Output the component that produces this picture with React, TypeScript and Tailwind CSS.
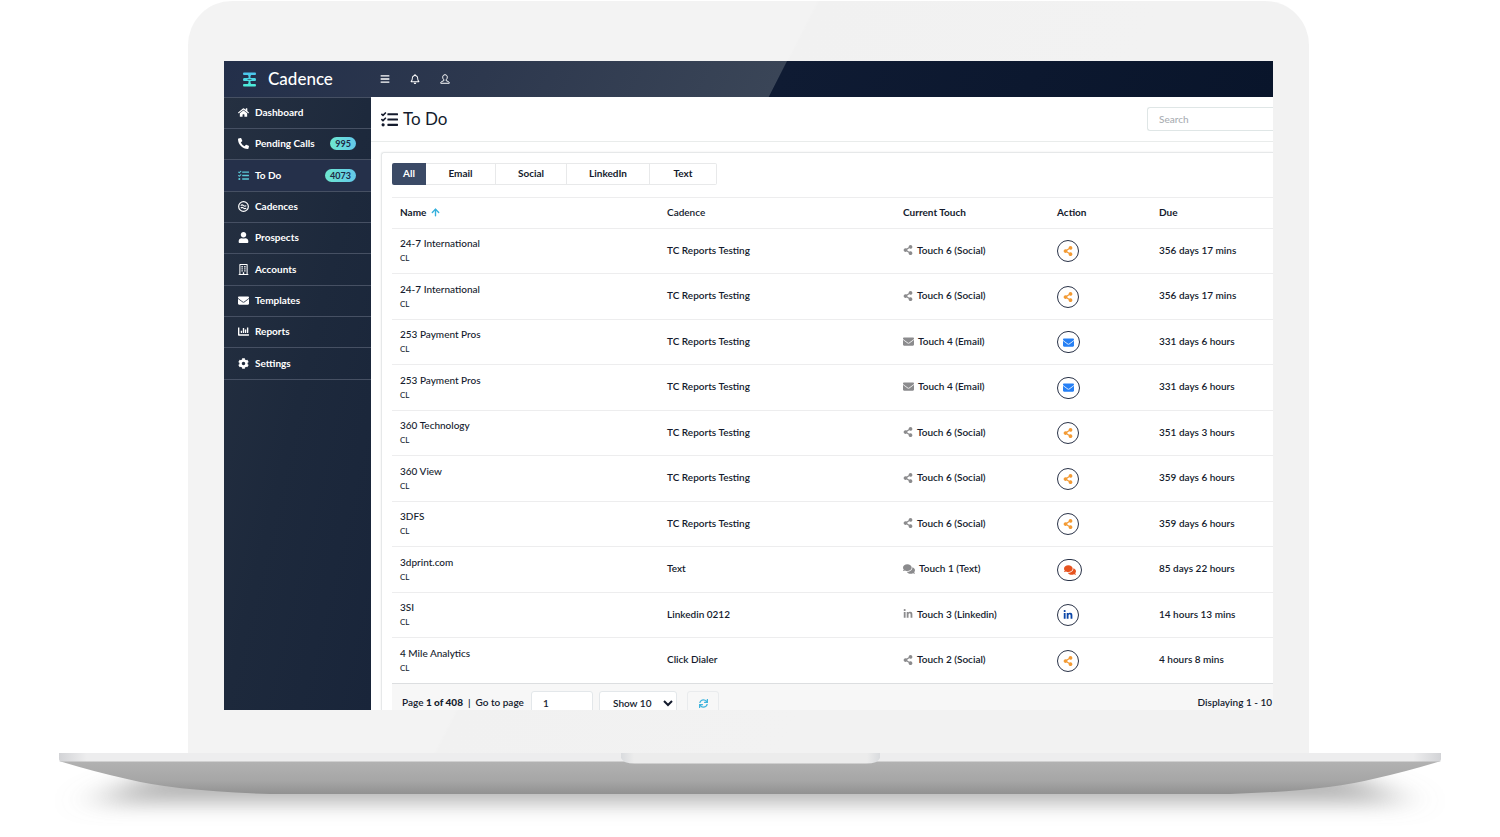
import { ArrowUp } from "lucide-react";
import type { IconType } from "react-icons";
import {
  FaBars,
  FaChartBar,
  FaCog,
  FaComments,
  FaEnvelope,
  FaHome,
  FaLinkedinIn,
  FaPhoneAlt,
  FaRegBell,
  FaRegBuilding,
  FaShareAlt,
  FaSync,
  FaTasks,
  FaUser,
} from "react-icons/fa";

type Channel = "social" | "email" | "text" | "linkedin";

interface Todo {
  name: string;
  cadence: string;
  touch: string;
  channel: Channel;
  due: string;
}

interface NavItem {
  label: string;
  icon: IconType | typeof CadenceIcon;
  count?: number;
  active?: boolean;
}

function CadenceIcon({ className }: { className?: string }) {
  return (
    <svg viewBox="0 0 20 20" className={className} fill="none" stroke="currentColor" strokeWidth="2.2">
      <circle cx="10" cy="10" r="8.8" />
      <path d="M5 8.300c2-2 3.300-1.600 5 0s3.300 1.600 5 0M5 12.800c2-2 3.300-1.600 5 0s3.300 1.600 5 0" strokeWidth="2" />
    </svg>
  );
}

function ProfileIcon({ className }: { className?: string }) {
  return (
    <svg viewBox="0 0 20 20" className={className} fill="none" stroke="currentColor" strokeWidth="2" strokeLinejoin="round">
      <path d="M10 1.500c-3 0-4.600 2-4.600 4.800 0 2.300.9 4.200 2.400 5.300v1.700L3 15.200c-1 .5-1.500 1.400-1.500 3.300h17c0-1.900-.5-2.800-1.500-3.300l-4.800-1.900v-1.700c1.500-1.100 2.400-3 2.400-5.300 0-2.800-1.600-4.800-4.600-4.800z" />
    </svg>
  );
}

function Logo() {
  return (
    <svg viewBox="0 0 13 15" className="h-[15px] w-[13px]">
      <defs>
        <linearGradient id="logo" x1="0" y1="0" x2="0" y2="1">
          <stop offset="0" stopColor="#4cc3ec" />
          <stop offset="1" stopColor="#4df0da" />
        </linearGradient>
      </defs>
      <path
        d="M1 .500h11q1 0 1 1.300t-1 1.300H8.200L7.500 4v2H12q1 0 1 1.500T12 9H7.500v2l.7.900H12q1 0 1 1.300t-1 1.300H1q-1 0-1-1.300t1-1.300h3.800l.7-.9V9H1Q0 9 0 7.500T1 6h4.500V4l-.7-.9H1q-1 0-1-1.300T1 .500z"
        fill="url(#logo)"
      />
      <path d="M4.500 7.500h4" stroke="#243049" strokeWidth=".6" />
    </svg>
  );
}

const navItems: NavItem[] = [
  { label: "Dashboard", icon: FaHome },
  { label: "Pending Calls", icon: FaPhoneAlt, count: 995 },
  { label: "To Do", icon: FaTasks, count: 4073, active: true },
  { label: "Cadences", icon: CadenceIcon },
  { label: "Prospects", icon: FaUser },
  { label: "Accounts", icon: FaRegBuilding },
  { label: "Templates", icon: FaEnvelope },
  { label: "Reports", icon: FaChartBar },
  { label: "Settings", icon: FaCog },
];

const tabs = [
  { label: "All", width: "w-[34px]" },
  { label: "Email", width: "w-[70px]" },
  { label: "Social", width: "w-[71px]" },
  { label: "LinkedIn", width: "w-[83px]" },
  { label: "Text", width: "w-[67px]" },
];

const todos: Todo[] = [
  { name: "24-7 International", cadence: "TC Reports Testing", touch: "Touch 6 (Social)", channel: "social", due: "356 days 17 mins" },
  { name: "24-7 International", cadence: "TC Reports Testing", touch: "Touch 6 (Social)", channel: "social", due: "356 days 17 mins" },
  { name: "253 Payment Pros", cadence: "TC Reports Testing", touch: "Touch 4 (Email)", channel: "email", due: "331 days 6 hours" },
  { name: "253 Payment Pros", cadence: "TC Reports Testing", touch: "Touch 4 (Email)", channel: "email", due: "331 days 6 hours" },
  { name: "360 Technology", cadence: "TC Reports Testing", touch: "Touch 6 (Social)", channel: "social", due: "351 days 3 hours" },
  { name: "360 View", cadence: "TC Reports Testing", touch: "Touch 6 (Social)", channel: "social", due: "359 days 6 hours" },
  { name: "3DFS", cadence: "TC Reports Testing", touch: "Touch 6 (Social)", channel: "social", due: "359 days 6 hours" },
  { name: "3dprint.com", cadence: "Text", touch: "Touch 1 (Text)", channel: "text", due: "85 days 22 hours" },
  { name: "3SI", cadence: "Linkedin 0212", touch: "Touch 3 (Linkedin)", channel: "linkedin", due: "14 hours 13 mins" },
  { name: "4 Mile Analytics", cadence: "Click Dialer", touch: "Touch 2 (Social)", channel: "social", due: "4 hours 8 mins" },
];

const channels: Record<Channel, { icon: IconType; size: string; button: string }> = {
  social: { icon: FaShareAlt, size: "size-[10px]", button: "w-[22px] text-[#f39a33]" },
  email: { icon: FaEnvelope, size: "size-[11px]", button: "w-[23px] text-[#2680f5]" },
  text: { icon: FaComments, size: "size-[12px]", button: "w-[25px] text-[#e6531f]" },
  linkedin: { icon: FaLinkedinIn, size: "size-[10px]", button: "w-[22px] text-[#0b46a8]" },
};

function Sidebar() {
  return (
    <nav className="w-[147px] shrink-0 bg-linear-to-br from-[#253041] via-[#1d293c] to-[#19253a]">
      <ul className="border-t border-[#465063]">
        {navItems.map(({ label, icon: Icon, count, active }) => (
          <li
            key={label}
            className={`h-[31px] border-b border-[#465063] nth-[3n]:h-8 ${active ? "bg-[#25304a]" : ""}`}
          >
            <a href="#" className="flex h-full items-center pr-[15px] pb-px pl-[14px] text-[10px] font-bold text-white">
              <Icon className={`mr-[6px] size-[11px] ${active ? "text-[#5bc8d8]" : ""}`} />
              {label}
              {count && (
                <span className="ml-auto rounded-full bg-linear-to-r from-[#6ee7cf] to-[#63c8ea] px-[5px] text-[9px] leading-[13px] text-[#1d2a44]">
                  {count}
                </span>
              )}
            </a>
          </li>
        ))}
      </ul>
    </nav>
  );
}

function TopBar() {
  return (
    <header className="flex h-9 items-center bg-[linear-gradient(117deg,#232f4a_0%,#2d384e_25%,#3a4557_52.700%,#0f1b33_52.800%,#09152b_100%)] text-white">
      <div className="flex w-[147px] items-center gap-3 pl-[19px]">
        <Logo />
        <span className="text-[17px] font-medium">Cadence</span>
      </div>
      <div className="flex items-center gap-5 pb-px pl-[9px]">
        <button aria-label="Toggle menu"><FaBars className="size-[10px]" /></button>
        <button aria-label="Notifications"><FaRegBell className="size-[10px]" /></button>
        <button aria-label="Profile"><ProfileIcon className="size-[10px]" /></button>
      </div>
    </header>
  );
}

function TodoTable() {
  return (
    <table className="w-full table-fixed border-t border-[#ededee] text-left">
      <thead>
        <tr className="h-[31px] border-b border-[#ededee]">
          <th className="w-[267px] pb-[2px] pl-2 font-bold">
            <span className="flex items-center gap-1">
              Name <ArrowUp className="size-[11px] text-[#35b0dc]" strokeWidth={3} />
            </span>
          </th>
          <th className="w-[236px] pb-[2px] pl-2 font-semibold">Cadence</th>
          <th className="w-[154px] pb-[2px] pl-2 font-bold">Current Touch</th>
          <th className="w-[102px] pb-[2px] pl-2 font-bold">Action</th>
          <th className="pb-[2px] pl-2 font-bold">Due</th>
        </tr>
      </thead>
      <tbody>
        {todos.map((todo, i) => {
          const { icon: Icon, size, button } = channels[todo.channel];
          return (
            <tr key={i} className="h-[45px] border-b border-[#ededee] last:border-[#dcdee0] even:h-[46px]">
              <td className="pl-2 font-medium">
                <div className="leading-[15px]">{todo.name}</div>
                <div className="text-[8px] leading-[15px]">CL</div>
              </td>
              <td className="pb-[2px] pl-2">{todo.cadence}</td>
              <td className="pb-[2px] pl-2">
                <span className="flex items-center gap-1">
                  <Icon className={`${size} text-[#8b8b8d]`} />
                  {todo.touch}
                </span>
              </td>
              <td className="pl-2">
                <button
                  aria-label={`Start ${todo.touch}`}
                  className={`flex h-[22px] items-center justify-center rounded-full border border-[#2a3348] ${button}`}
                >
                  <Icon className={size} />
                </button>
              </td>
              <td className="pb-[2px] pl-2">{todo.due}</td>
            </tr>
          );
        })}
      </tbody>
    </table>
  );
}

function Pager() {
  return (
    <div className="flex h-[26px] items-start overflow-hidden bg-[#f7f7f7] pt-[7px] pl-[10px]">
      <label htmlFor="page" className="w-[124px] leading-[22px]">
        Page <b>1 of 408</b>&nbsp; | &nbsp;Go to page
      </label>
      <input
        id="page"
        defaultValue="1"
        className="ml-[5px] h-6 w-[62px] rounded-[3px] border border-[#e3e7ea] bg-white px-[11px]"
      />
      <select
        aria-label="Rows per page"
        className="ml-[6px] h-6 w-[78px] rounded-[3px] border border-[#e3e7ea] bg-white pl-[9px]"
      >
        <option>Show 10</option>
        <option>Show 25</option>
      </select>
      <button
        aria-label="Refresh"
        className="ml-[10px] flex h-6 w-8 items-center justify-center rounded-[3px] border border-[#e9ebed] text-[#3fb4dd]"
      >
        <FaSync className="size-[9px]" />
      </button>
      <span className="ml-auto pr-px leading-[22px]">Displaying 1 - 10</span>
    </div>
  );
}

function TodoPage() {
  return (
    <main className="flex min-w-0 flex-1 flex-col bg-white text-[10px] font-semibold text-[#141b2d]">
      <div className="flex h-[45px] items-center border-b border-[#e9eceb] pl-[10px]">
        <FaTasks className="mr-[5px] size-[17px]" />
        <h1 className="text-[17px] font-normal">To Do</h1>
        <input
          type="search"
          placeholder="Search"
          aria-label="Search"
          className="ml-auto h-6 w-[126px] rounded-l-[3px] border border-r-0 border-[#dfe6e6] px-[11px] font-medium placeholder:text-[#a9adb2]"
        />
      </div>
      <section className="mt-[10px] ml-[10px] flex-1 rounded-tl-[3px] border-t border-l border-[#e6e8e9] pt-[10px] pl-[10px] shadow-[0_0_2px_#e6e8e9]">
        <div className="mb-3 flex h-[22px]">
          {tabs.map(({ label, width }, i) => (
            <button
              key={label}
              className={`${width} pb-px font-bold first:rounded-l-[2px] last:rounded-r-[2px] ${
                i === 0 ? "bg-[#3b4a66] text-white" : "border-y border-r border-[#e8e9ea]"
              }`}
            >
              {label}
            </button>
          ))}
        </div>
        <TodoTable />
        <Pager />
      </section>
    </main>
  );
}

function LaptopBase() {
  return (
    <svg viewBox="0 0 1500 84" preserveAspectRatio="none" className="block h-[84px] w-full" aria-hidden="true">
      <defs>
        <linearGradient id="body" x1="0" y1="0" x2="0" y2="1">
          <stop offset="0" stopColor="#b2b2b2" />
          <stop offset="0.6" stopColor="#a6a6a6" />
          <stop offset="1" stopColor="#919191" />
        </linearGradient>
        <linearGradient id="edge">
          <stop offset="0" stopColor="#d2d3d6" />
          <stop offset="0.02" stopColor="#ededee" />
          <stop offset="0.98" stopColor="#ededee" />
          <stop offset="1" stopColor="#d2d3d6" />
        </linearGradient>
        <linearGradient id="notch">
          <stop offset="0" stopColor="#d9dbde" />
          <stop offset="0.05" stopColor="#ececec" />
          <stop offset="0.95" stopColor="#ececec" />
          <stop offset="1" stopColor="#d9dbde" />
        </linearGradient>
        <filter id="soft" x="-10%" y="-80%" width="120%" height="280%">
          <feGaussianBlur stdDeviation="20 10" />
        </filter>
      </defs>
      <path d="M160 18H1340L1410 50H90z" fill="#8d8d8d" fillOpacity="0.650" filter="url(#soft)" />
      <path d="M0 0H1500V8H1441L59 8H0z" fill="#fff" />
      <path d="M59 8Q95 19 127 26Q175 38 270 41H1230Q1325 38 1373 26Q1405 19 1441 8z" fill="url(#body)" />
      <path d="M59 0H1441V6Q1441 8.500 1438 8.500H62Q59 8.500 59 6z" fill="url(#edge)" />
      <path d="M621 0H880V5Q878 10.500 866 10.500H635Q623 10.500 621 5z" fill="url(#notch)" />
    </svg>
  );
}

export default function App() {
  return (
    <div className="min-h-screen overflow-hidden bg-white pt-px font-[Lato,sans-serif]">
      <div className="mr-[191px] ml-[188px] rounded-t-[44px] bg-[linear-gradient(117deg,#f3f3f3_0%,#f3f3f3_41.800%,#f1f1f1_42%,#f2f2f2_65%)] px-9 pt-[60px] pb-[43px]">
        <div className="overflow-hidden">
          <TopBar />
          <div className="flex">
            <Sidebar />
            <TodoPage />
          </div>
        </div>
      </div>
      <LaptopBase />
    </div>
  );
}
